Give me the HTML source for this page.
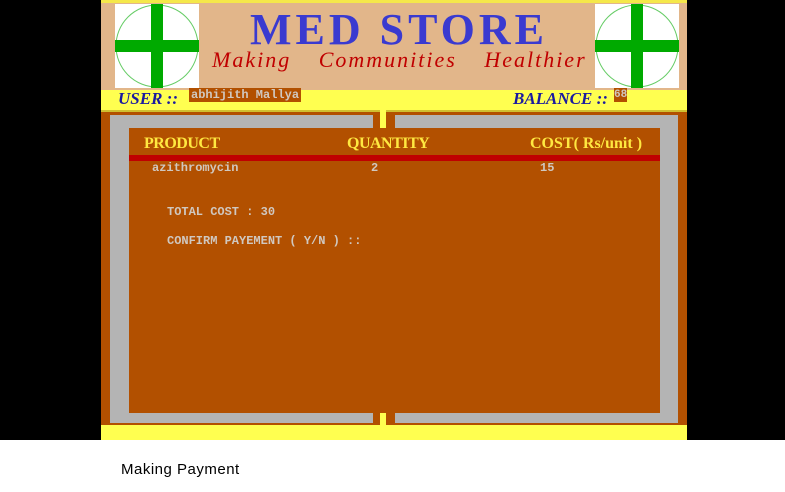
<!DOCTYPE html>
<html><head><style>
body{margin:0;width:785px;height:492px;background:#fff;position:relative;overflow:hidden;font-family:"Liberation Sans",sans-serif}
.a{position:absolute}
.mono{font-family:"Liberation Mono",monospace;color:#d0c8c0;font-size:12px;font-weight:bold}
.ser{font-family:"Liberation Serif",serif}
</style></head><body>
<div class="a" style="left:0;top:0;width:785px;height:440px;background:#000"></div>
<div class="a" style="left:101px;top:0;width:586px;height:440px;background:#b25000"></div>
<div class="a" style="left:101px;top:0;width:586px;height:90px;background:#e2b68a;border-top:3px solid #f5e84a;box-sizing:border-box"></div>
<div class="a" style="left:115px;top:4px;width:84px;height:84px;background:#fff"></div>
<div class="a" style="left:595px;top:4px;width:84px;height:84px;background:#fff"></div>
<svg class="a" style="left:115px;top:4px" width="84" height="84"><circle cx="42" cy="42" r="41" fill="none" stroke="#6c6" stroke-width="1"/><rect x="36" y="0" width="12" height="84" fill="#00aa00"/><rect x="0" y="36" width="84" height="12" fill="#00aa00"/></svg>
<svg class="a" style="left:595px;top:4px" width="84" height="84"><circle cx="42" cy="42" r="41" fill="none" stroke="#6c6" stroke-width="1"/><rect x="36" y="0" width="12" height="84" fill="#00aa00"/><rect x="0" y="36" width="84" height="12" fill="#00aa00"/></svg>
<div class="a ser" style="left:250px;top:8px;font-size:44px;color:#3a3ad0;font-weight:bold;letter-spacing:4px;line-height:44px">MED STORE</div>
<div class="a ser" style="left:212px;top:47px;font-size:22px;color:#c00000;font-style:italic;word-spacing:20px;letter-spacing:2px">Making Communities Healthier</div>
<div class="a" style="left:101px;top:90px;width:586px;height:20px;background:#ffff50;border-bottom:2px solid #d0c030"></div>
<div class="a ser" style="left:118px;top:89px;font-size:17px;color:#1a1aa0;font-style:italic;font-weight:bold">USER ::</div>
<div class="a mono" style="left:189px;top:88px;background:#b25000;padding:0 2px;height:14px;line-height:14px">abhijith Mallya</div>
<div class="a ser" style="left:513px;top:89px;font-size:17px;color:#1a1aa0;font-style:italic;font-weight:bold">BALANCE ::</div>
<div class="a mono" style="left:614px;top:88px;background:#b25000;height:14px;line-height:14px;font-size:11px">68</div>
<div class="a" style="left:110px;top:115px;width:568px;height:308px;background:#b4b4b4"></div>
<div class="a" style="left:373px;top:112px;width:22px;height:313px;background:#b25000"></div>
<div class="a" style="left:380px;top:100px;width:6px;height:30px;background:#ffff50"></div>
<div class="a" style="left:380px;top:413px;width:6px;height:14px;background:#ffff50"></div>
<div class="a" style="left:129px;top:128px;width:531px;height:285px;background:#b25000"></div>
<div class="a" style="left:129px;top:155px;width:531px;height:6px;background:#c00000"></div>
<div class="a ser" style="left:144px;top:135px;font-size:16px;color:#ffe840;font-weight:bold;letter-spacing:-0.5px">PRODUCT</div>
<div class="a ser" style="left:347px;top:135px;font-size:16px;color:#ffe840;font-weight:bold;letter-spacing:-0.5px">QUANTITY</div>
<div class="a ser" style="left:530px;top:135px;font-size:16px;color:#ffe840;font-weight:bold;letter-spacing:0px">COST( Rs/unit )</div>
<div class="a mono" style="left:152px;top:161px">azithromycin</div>
<div class="a mono" style="left:371px;top:161px">2</div>
<div class="a mono" style="left:540px;top:161px">15</div>
<div class="a mono" style="left:167px;top:205px">TOTAL COST :  30</div>
<div class="a mono" style="left:167px;top:234px">CONFIRM PAYEMENT ( Y/N ) ::</div>
<div class="a" style="left:101px;top:425px;width:586px;height:15px;background:#ffff50"></div>
<div class="a" style="left:121px;top:461px;font-size:15px;color:#000;letter-spacing:0.5px">Making Payment</div>
</body></html>
